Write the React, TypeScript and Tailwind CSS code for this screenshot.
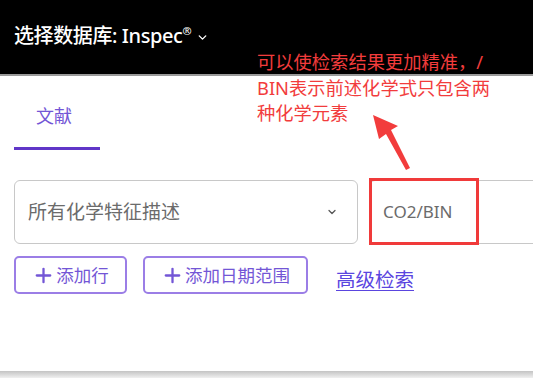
import { Plus, ChevronDown } from "lucide-react";

const font = { fontFamily: '"Noto Sans", "Noto Sans CJK SC", sans-serif' };

export default function App() {
  return (
    <div className="relative w-[533px] h-[378px] overflow-hidden bg-white" style={font}>
      {/* 顶部栏 */}
      <div className="h-[76px] bg-black border-b-2 border-[#9a9a9a] flex items-center pl-[14px] pb-[3px]">
        <span className="text-white text-[20px] font-medium tracking-[-0.4px]">
          选择数据库: Inspec<sup className="text-[11px] -top-[8px]">®</sup>
        </span>
        <ChevronDown className="w-[13px] h-[13px] text-white ml-[5px] mt-[3px]" strokeWidth={2.5} />
      </div>

      {/* 标签 */}
      <div className="pl-[14px] mt-[28px]">
        <div className="w-[86px] flex flex-col items-center">
          <span className="text-[18px] text-[#7356d6] leading-[24px] -ml-[6px]">文献</span>
          <div className="w-full h-[3px] bg-[#6036c8] mt-[19px]" />
        </div>
      </div>

      {/* 检索行 */}
      <div className="flex pl-[14px] mt-[30px] gap-[11px]">
        <div className="w-[344px] h-[64px] shrink-0 rounded-[6px] border border-[#c8c8c8] flex items-center justify-between pl-[13px] pr-[19px]">
          <span className="text-[19px] text-[#6b6b6b]">所有化学特征描述</span>
          <ChevronDown className="w-[12px] h-[12px] text-[#555]" strokeWidth={2.5} />
        </div>
        <div className="relative w-[200px] h-[64px] shrink-0 rounded-l-[6px] border border-[#c8c8c8] flex items-center pl-[13px]">
          <span className="text-[17px] text-[#6b6b6b]">CO2/BIN</span>
          <div className="absolute -left-px -top-[3px] w-[110px] h-[67px] border-[3px] border-[#f03a3a]" />
        </div>
      </div>

      {/* 按钮 */}
      <div className="flex items-center pl-[14px] mt-[12px]">
        <button className="w-[113px] h-[38px] rounded-[5px] border-2 border-[#9b7ee6] flex items-center justify-center gap-[1px] text-[17.5px] text-[#7356d6]">
          <Plus className="w-[23px] h-[23px]" strokeWidth={2.4} />
          添加行
        </button>
        <button className="ml-[16px] w-[165px] h-[38px] rounded-[5px] border-2 border-[#9b7ee6] flex items-center justify-center gap-[1px] text-[17.5px] text-[#7356d6]">
          <Plus className="w-[23px] h-[23px]" strokeWidth={2.4} />
          添加日期范围
        </button>
        <a className="ml-[28px] text-[19.5px] text-[#5a45df] underline underline-offset-[3px] mt-[9px]">高级检索</a>
      </div>

      {/* 底部 */}
      <div className="absolute left-0 right-0 bottom-0 h-[7px] bg-gradient-to-b from-[#c4c4c4] to-[#f0f0f0]" />

      {/* 标注 */}
      <div className="absolute left-[257px] top-[49px] text-[18.3px] leading-[25.5px] text-[#f23c3c]">
        <div>可以使检索结果更加精准，/</div>
        <div>BIN表示前述化学式只包含两</div>
        <div>种化学元素</div>
      </div>
      <svg className="absolute left-[368px] top-[110px]" width="50" height="62" viewBox="0 0 50 62">
        <polygon points="5,5 30,16 23,20 42,58 38,60 18,24 11,29" fill="#f23c3c" />
      </svg>
    </div>
  );
}
